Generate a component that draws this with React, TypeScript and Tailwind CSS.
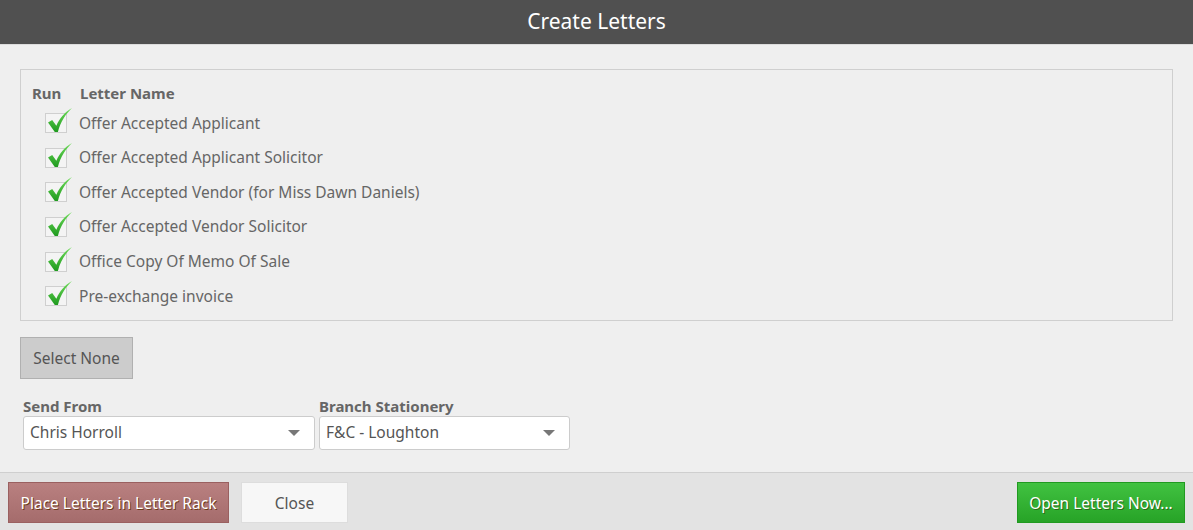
import React from "react";

const letters = [
  "Offer Accepted Applicant",
  "Offer Accepted Applicant Solicitor",
  "Offer Accepted Vendor (for Miss Dawn Daniels)",
  "Offer Accepted Vendor Solicitor",
  "Office Copy Of Memo Of Sale",
  "Pre-exchange invoice",
];

function Check() {
  return (
    <div className="relative w-[22px] h-[20px] border border-[#cfcfcf] bg-[#f4f4f4] shrink-0">
      <svg className="absolute left-[1px] top-[-7px]" width="27" height="27" viewBox="0 0 26 26">
        <defs>
          <linearGradient id="g" x1="0" y1="0" x2="0" y2="1">
            <stop offset="0" stopColor="#6fdc5a" />
            <stop offset="1" stopColor="#1f9a1f" />
          </linearGradient>
        </defs>
        <path d="M1 15 L5 12.5 L9 18 C12 11 17 5 24 1 C18 7 13 14 10.5 24 L7.5 24 Z" fill="url(#g)" />
      </svg>
    </div>
  );
}

function Select({ value, width }: { value: string; width: string }) {
  return (
    <div className={`${width} h-[34px] bg-white border border-[#cccccc] rounded-[3px] flex items-center justify-between pl-[6px] pr-[14px]`}>
      <span className="text-[15.5px] text-[#555]">{value}</span>
      <svg width="12" height="6" viewBox="0 0 12 6"><path d="M0 0 L12 0 L6 6 Z" fill="#777" /></svg>
    </div>
  );
}

export default function App() {
  return (
    <div className="w-[1193px] h-[530px] flex flex-col bg-[#efefef] text-[#666]" style={{ fontFamily: '"Noto Sans", "Open Sans", sans-serif' }}>
      <div className="h-[45px] bg-[#505050] flex items-center justify-center border-b border-[#dcdcdc]">
        <span className="text-white text-[21px] leading-none mt-[-2px]">Create Letters</span>
      </div>
      <div className="flex-1 flex flex-col px-[20px] pt-[24px]">
        <div className="border border-[#cfcfcf] h-[252px] pl-[11px] pt-[12px]">
          <div className="flex text-[15px] font-bold text-[#666] h-[22px] items-center">
            <span className="w-[48px]">Run</span>
            <span>Letter Name</span>
          </div>
          <div className="flex flex-col pt-[2px]">
            {letters.map((l) => (
              <div key={l} className="h-[34.6px] flex items-center pl-[13px]">
                <Check />
                <span className="ml-[12px] text-[15.5px] text-[#666]">{l}</span>
              </div>
            ))}
          </div>
        </div>
        <div className="mt-[16px]">
          <button className="w-[113px] h-[42px] bg-[#cccccc] border border-[#b0b0b0] text-[15.5px] text-[#555] pt-[2px]">Select None</button>
        </div>
        <div className="flex mt-[17px] gap-[4px] ml-[3px]">
          <div className="flex flex-col">
            <span className="text-[15px] font-bold text-[#666] leading-[20px]">Send From</span>
            <Select value="Chris Horroll" width="w-[292px]" />
          </div>
          <div className="flex flex-col">
            <span className="text-[15px] font-bold text-[#666] leading-[20px]">Branch Stationery</span>
            <Select value="F&C - Loughton" width="w-[251px]" />
          </div>
        </div>
      </div>
      <div className="h-[58px] bg-[#e3e3e3] border-t border-[#cfcfcf] flex items-center px-[8px] pt-[2px]">
        <button
          className="w-[221px] h-[41px] border border-[#9a6060] text-white text-[15.5px] pt-[2px]"
          style={{ background: "linear-gradient(#b98080, #a56c6c)", textShadow: "1px 1px 0 #6b3a1a" }}
        >
          Place Letters in Letter Rack
        </button>
        <button className="ml-[12px] w-[107px] h-[41px] bg-[#f7f7f7] border border-[#dddddd] text-[15.5px] text-[#555] pt-[2px]">Close</button>
        <div className="flex-1" />
        <button
          className="w-[168px] h-[41px] border border-[#219a21] text-white text-[15.5px] pt-[2px]"
          style={{ background: "linear-gradient(#41c241, #27a327)", textShadow: "1px 1px 0 #2a6a1a" }}
        >
          Open Letters Now...
        </button>
      </div>
    </div>
  );
}
